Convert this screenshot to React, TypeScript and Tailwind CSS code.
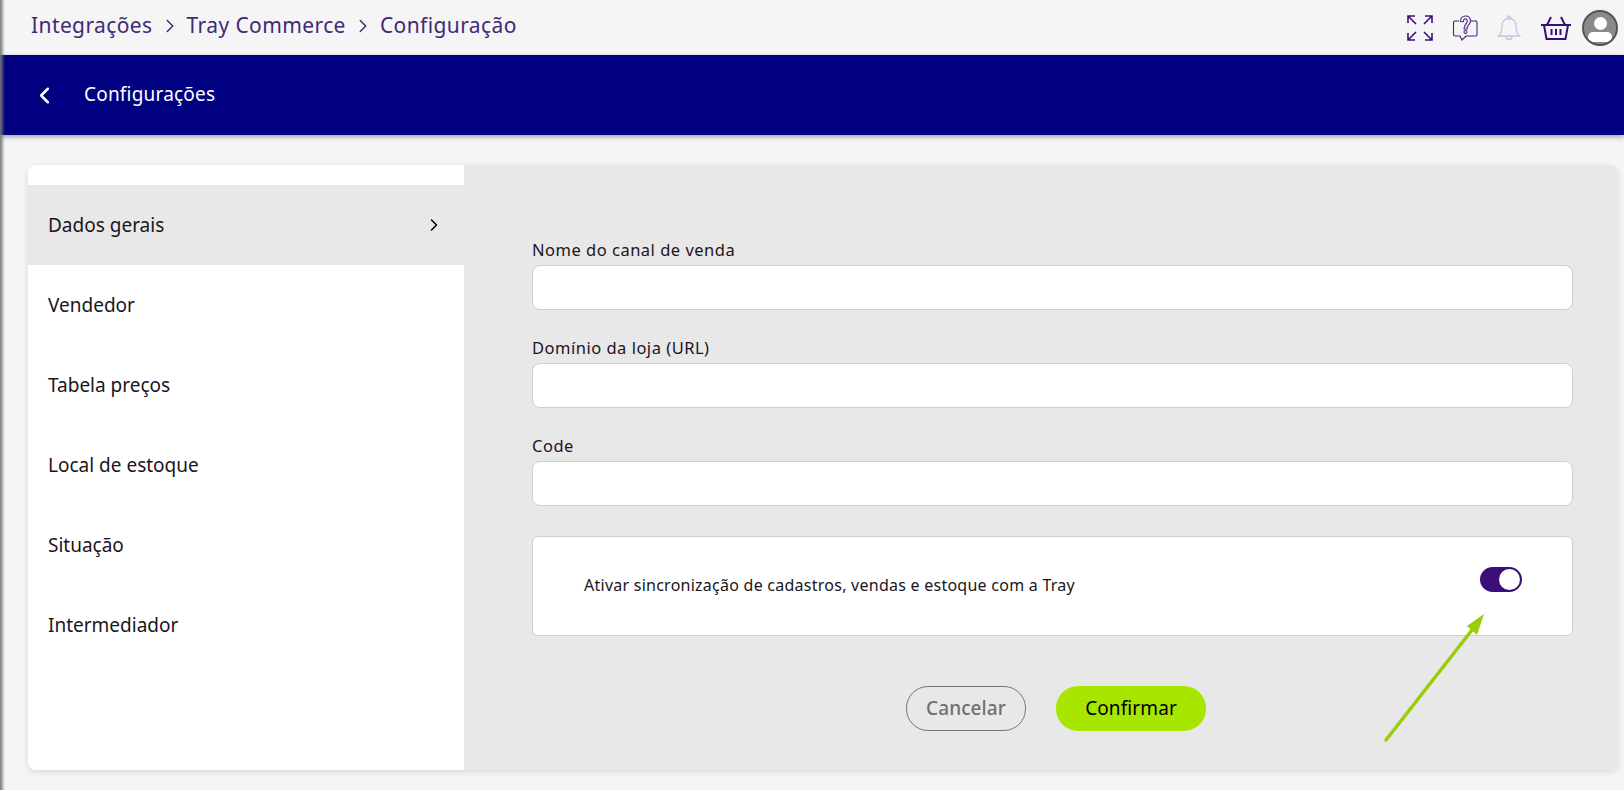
import React from "react";
import { ChevronLeft, ChevronRight } from "lucide-react";

const font = "font-['Noto_Sans',sans-serif]";

const menuItems = ["Dados gerais", "Vendedor", "Tabela preços", "Local de estoque", "Situação", "Intermediador"];
const fields = ["Nome do canal de venda", "Domínio da loja (URL)", "Code"];

const ExpandIcon = () => (
  <svg width="26" height="26" viewBox="0 0 26 26" fill="none" stroke="#3b0f78" strokeWidth="1.6">
    <path d="M1 8V1h7M1 1l8 8M18 1h7v7M25 1l-8 8M1 18v7h7M1 25l8-8M25 18v7h-7M25 25l-8-8" />
  </svg>
);

const HelpIcon = () => (
  <svg width="26" height="26" viewBox="0 0 26 26" fill="none" stroke="#4a2186" strokeWidth="1.1">
    <path d="M7 6H3a1.500 1.500 0 0 0-1.500 1.500v12A1.500 1.500 0 0 0 3 21h5l2 4 4-4h9.500a1.500 1.500 0 0 0 1.500-1.500v-12A1.500 1.500 0 0 0 23 6h-4" />
    <path d="M8.500 6.500C8.500 3 10.500 1 13.500 1s5 2 5 5c0 3.500-3.500 4-3.500 8h-3c0-4.500 3.200-5 3.200-8 0-1.300-.8-2.200-1.700-2.200s-2 1-2.200 2.900z" />
    <circle cx="13.500" cy="17" r="1.500" />
  </svg>
);

const BellIcon = () => (
  <svg width="24" height="26" viewBox="0 0 24 26" fill="none" stroke="#cdbfe3" strokeWidth="1.3">
    <path d="M12 3.500c-4.500 0-7 3.300-7 7.500 0 5-1.500 8-3.500 10h21c-2-2-3.500-5-3.500-10 0-4.200-2.500-7.500-7-7.500z" />
    <circle cx="12" cy="2.500" r="1.500" />
    <path d="M9 21.500a3 3 0 0 0 6 0" />
  </svg>
);

const BasketIcon = () => (
  <svg width="30" height="24" viewBox="0 0 30 24" fill="none" stroke="#3b0f78" strokeWidth="2">
    <path d="M0 9h30M3 9l2.500 14h19L27 9M10 1L6 9M20 1l4 8M10.500 13v6M15 13v6M19.500 13v6" />
  </svg>
);

const Avatar = () => (
  <div className="relative flex h-[36px] w-[36px] shrink-0 flex-col items-center overflow-hidden rounded-full border-2 border-[#555] bg-[#8a8a8a]">
    <div className="mt-[5px] h-[13px] w-[13px] rounded-full bg-white" />
    <div className="mt-[2px] h-[10px] w-[24px] rounded-full bg-white" />
  </div>
);

export default function App() {
  return (
    <div className={`${font} relative flex h-[790px] w-[1624px] flex-col overflow-hidden bg-[#f5f5f5]`}>
      {/* Top bar */}
      <header className="flex h-[55px] shrink-0 items-center justify-between pl-[31px] pr-[6px] text-[21px] tracking-[0.4px] text-[#3f2a75]">
        <div className="mt-[-3px] flex items-center gap-[6px]">
          <span>Integrações</span>
          <ChevronRight size={22} strokeWidth={1.6} />
          <span>Tray Commerce</span>
          <ChevronRight size={22} strokeWidth={1.6} />
          <span>Configuração</span>
        </div>
        <div className="flex items-center">
          <div className="mr-[19px]"><ExpandIcon /></div>
          <div className="mr-[19px]"><HelpIcon /></div>
          <div className="mr-[20px]"><BellIcon /></div>
          <div className="mr-[11px]"><BasketIcon /></div>
          <Avatar />
        </div>
      </header>

      {/* Title bar */}
      <div className="flex h-[80px] shrink-0 items-center bg-[#000080] pl-[31px] text-[19px] tracking-[0.2px] text-white shadow-[0_2px_5px_rgba(0,0,0,0.35)]">
        <ChevronLeft size={27} strokeWidth={2.2} />
        <span className="mb-[2px] ml-[26px]">Configurações</span>
      </div>

      {/* Card */}
      <main className="ml-[28px] mr-[6px] mt-[30px] flex h-[605px] overflow-hidden rounded-[8px] shadow-[0_2px_6px_rgba(0,0,0,0.12)]">
        <nav className="w-[436px] shrink-0 bg-white pt-[20px] text-[19px] text-[#1c1420]">
          {menuItems.map((item, i) => (
            <div
              key={item}
              className={`flex h-[80px] items-center justify-between pl-[20px] pr-[20px] ${i === 0 ? "bg-[#e8e8e8]" : ""}`}
            >
              <span>{item}</span>
              {i === 0 && <ChevronRight size={20} strokeWidth={1.8} className="text-black" />}
            </div>
          ))}
        </nav>

        <section className="flex-1 bg-[#e8e8e8] pl-[68px] pr-[45px] pt-[73px]">
          <div className="flex flex-col gap-[26px]">
            {fields.map((label) => (
              <div key={label} className="flex flex-col">
                <label className="h-[27px] text-[16.500px] leading-[24px] tracking-[0.5px] text-[#1c1420]">{label}</label>
                <input className="h-[45px] w-full rounded-[8px] border border-[#cfcfcf] bg-white" />
              </div>
            ))}
          </div>

          <div className="mt-[30px] flex h-[100px] items-center justify-between rounded-[6px] border border-[#cfcfcf] bg-white pl-[51px] pr-[50px]">
            <span className="mt-[-2px] text-[16px] tracking-[0.25px] text-[#1c1420]">Ativar sincronização de cadastros, vendas e estoque com a Tray</span>
            <div className="mt-[-13px] flex h-[25px] w-[42px] items-center justify-end rounded-full bg-[#3b0f78] pr-[2px]">
              <div className="h-[21px] w-[21px] rounded-full bg-white" />
            </div>
          </div>

          <div className="mt-[50px] flex justify-center gap-[30px] pl-[7px] text-[19px] tracking-[0.1px]">
            <button className="h-[45px] w-[120px] rounded-[22px] border border-[#777] font-medium text-[#6f6f6f]">Cancelar</button>
            <button className="h-[45px] w-[150px] rounded-[22px] bg-[#a8e600] text-black">Confirmar</button>
          </div>
        </section>
      </main>

      {/* Left window shadow */}
      <div className="absolute inset-y-0 left-0 w-[5px] bg-gradient-to-r from-[#777] to-transparent" />

      {/* Annotation arrow */}
      <svg className="absolute left-[1376px] top-[604px]" width="120" height="146" viewBox="0 0 120 146" fill="none">
        <path d="M10 136L96 26" stroke="#9acd0a" strokeWidth="3.500" strokeLinecap="round" />
        <path d="M108 10L91 22L101 31Z" fill="#9acd0a" />
      </svg>
    </div>
  );
}
